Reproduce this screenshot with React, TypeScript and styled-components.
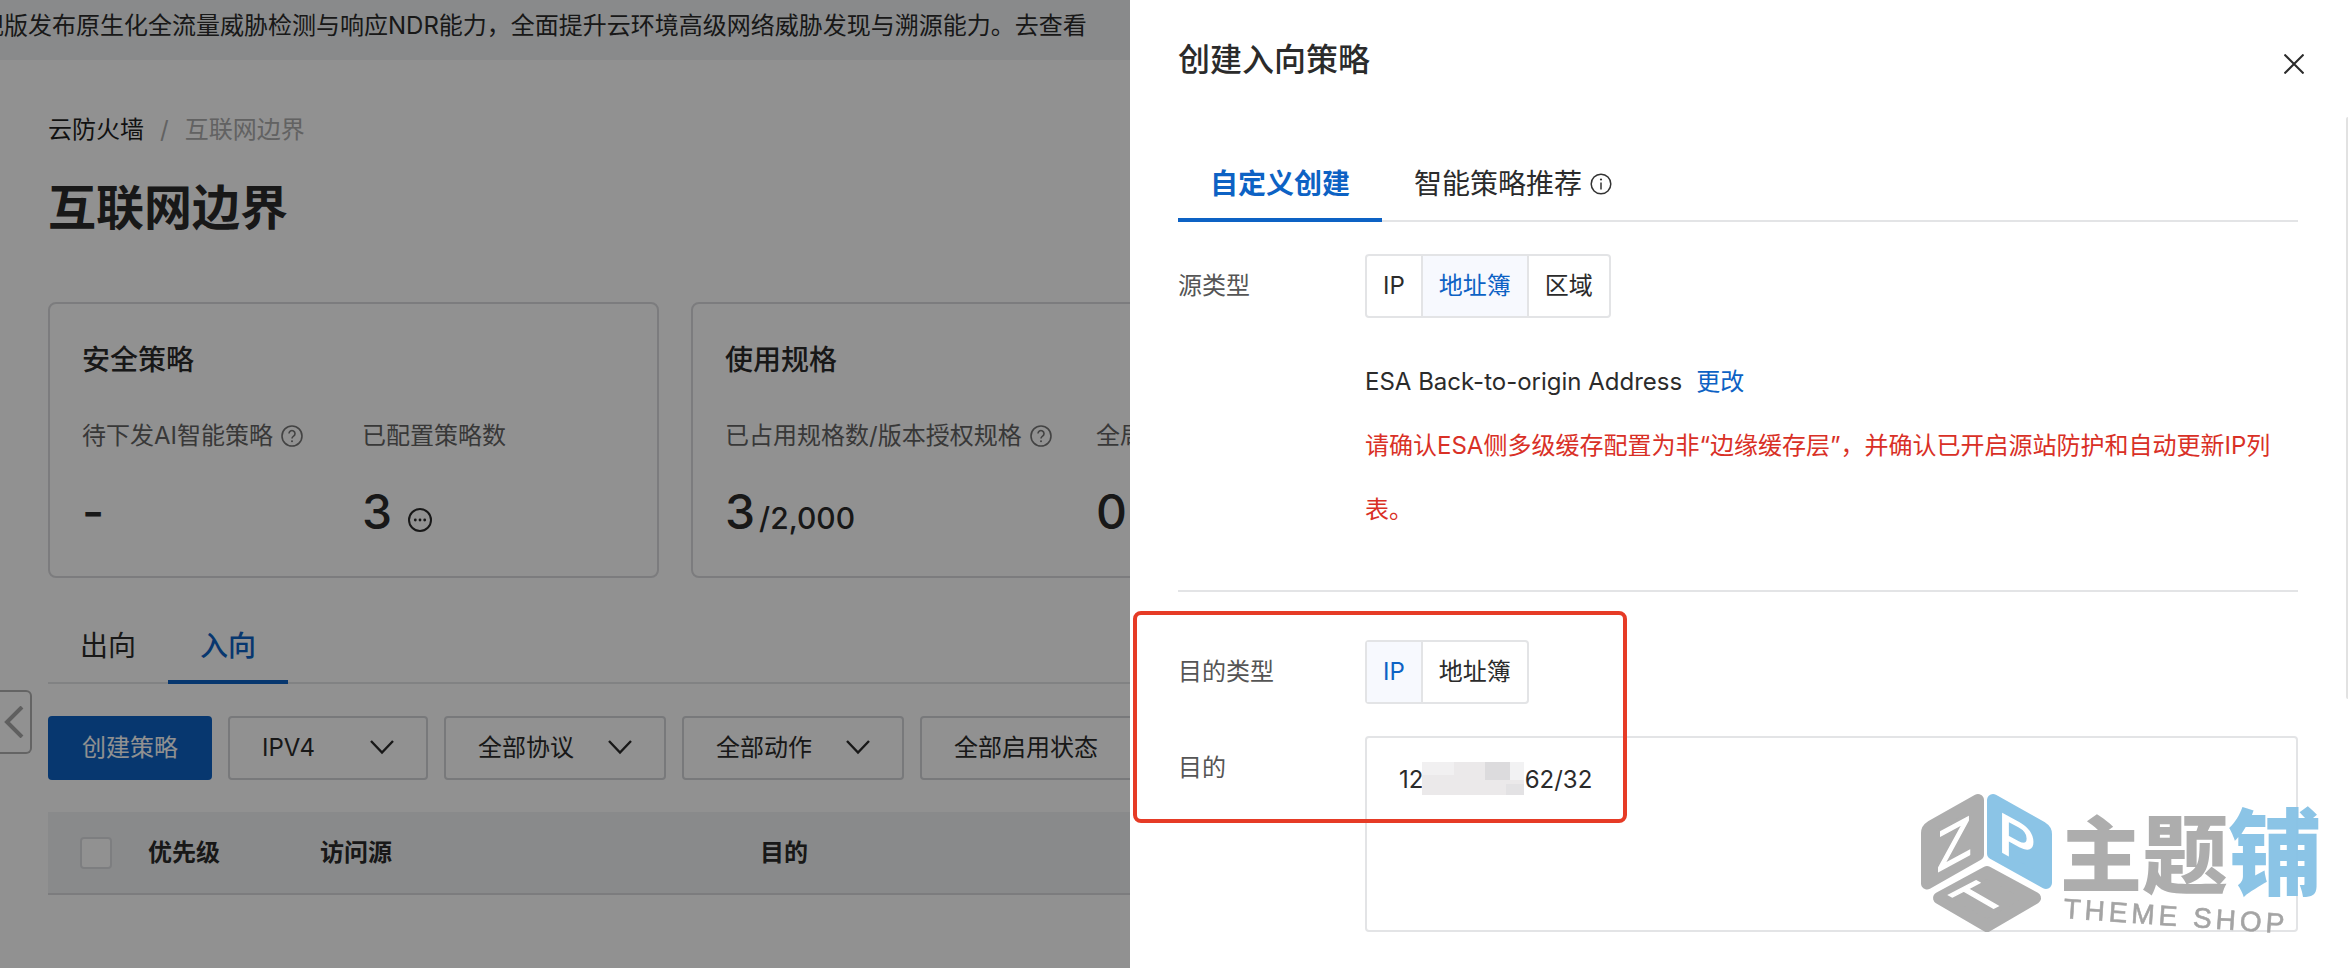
import React, { useState } from "react";
import styled, { createGlobalStyle, css } from "styled-components";

const blue = "#0d62c4";
const line = "#e3e4e6";
const ink = "#2b2b2b";

const GlobalStyle = createGlobalStyle`
  *, *::before, *::after { box-sizing: border-box; }
  body {
    margin: 0;
    background: #fff;
    color: ${ink};
    font: 400 24px/32px Inter, "Noto Sans CJK SC", sans-serif;
    overflow-x: hidden;
  }
  button, select, textarea, input { font: inherit; color: inherit; margin: 0; }
  h1, h2, h3, p { margin: 0; font-weight: 500; }
`;

const Page = styled.div`
  position: relative;
  min-height: 100vh;
  overflow: hidden;
`;

const Banner = styled.div`
  height: 60px;
  padding: 10px 0;
  overflow: hidden;
  background: #f1f3f5;
  white-space: nowrap;
  text-indent: -20px;
`;

const BannerLink = styled.a`
  color: inherit;
  text-decoration: none;
`;

const Main = styled.main`
  padding: 54px 48px 0;
`;

const Breadcrumb = styled.nav`
  display: flex;
  gap: 16px;
  color: #acacac;

  a {
    color: #1f1f1f;
    text-decoration: none;
  }
`;

const PageTitle = styled.h1`
  margin-top: 30px;
  font-size: 48px;
  line-height: 64px;
  font-weight: 700;
`;

const Cards = styled.div`
  display: grid;
  grid-template-columns: 611px 1fr;
  gap: 32px;
  margin-top: 62px;
`;

const Card = styled.section`
  padding: 36px 32px 40px;
  border: 2px solid #dadbdd;
  border-radius: 8px;
`;

const CardTitle = styled.h2`
  font-size: 28px;
  line-height: 40px;
`;

const Stats = styled.div<{ $first: number }>`
  display: grid;
  grid-template-columns: ${(p) => p.$first}px 1fr;
  margin-top: 40px;
`;

const StatLabel = styled.div`
  display: flex;
  align-items: center;
  gap: 8px;
  color: #636363;
  white-space: nowrap;
`;

const StatValue = styled.div`
  display: flex;
  align-items: baseline;
  gap: 4px;
  height: 48px;
  margin-top: 36px;
  font-size: 48px;
  line-height: 48px;
  font-weight: 500;

  small {
    font-size: 30px;
  }
  svg {
    align-self: flex-end;
    margin: 0 0 4px 12px;
  }
`;

const TabList = styled.div<{ $top: number }>`
  display: flex;
  height: 76px;
  margin-top: ${(p) => p.$top}px;
  box-shadow: inset 0 -2px ${line};
`;

const Tab = styled.button<{ $bold?: boolean }>`
  display: flex;
  align-items: center;
  gap: 8px;
  padding: 0 32px;
  border: 0;
  background: none;
  font-size: 28px;
  line-height: 40px;

  &[aria-selected="true"] {
    color: ${blue};
    font-weight: ${(p) => (p.$bold ? 700 : 500)};
    box-shadow: inset 0 -4px ${blue};
  }
`;

const Toolbar = styled.div`
  display: flex;
  gap: 16px;
  margin-top: 32px;
`;

const PrimaryButton = styled.button`
  width: 164px;
  height: 64px;
  border: 0;
  border-radius: 4px;
  background: ${blue};
  color: #fff;
`;

const SelectBox = styled.div<{ $width: number }>`
  position: relative;
  width: ${(p) => p.$width}px;

  select {
    width: 100%;
    height: 64px;
    padding: 0 32px;
    border: 2px solid #d3d5d8;
    border-radius: 4px;
    background: none;
    appearance: none;
  }
  svg {
    position: absolute;
    right: 34px;
    top: 23px;
    pointer-events: none;
  }
`;

const RuleTable = styled.table`
  width: 100%;
  margin-top: 32px;
  border-collapse: separate;
  border-spacing: 0;
  table-layout: fixed;
  background: #f1f3f5;

  th {
    height: 83px;
    padding: 0;
    border-bottom: 2px solid #dadbdd;
    text-align: left;
    font-weight: 700;
  }
`;

const HeadCell = styled.th<{ $width?: number }>`
  ${(p) => p.$width && css`width: ${p.$width}px;`}
`;

const CheckBox = styled.input`
  display: block;
  width: 32px;
  height: 32px;
  margin-left: 32px;
  border: 2px solid #dcdee1;
  border-radius: 4px;
  background: #fff;
  appearance: none;
`;

const Collapse = styled.button`
  position: absolute;
  left: 0;
  top: 690px;
  display: flex;
  align-items: center;
  width: 32px;
  height: 64px;
  padding: 0 0 0 4px;
  border: 2px solid #b0b0b0;
  border-left: 0;
  border-radius: 0 6px 6px 0;
  background: #fff;
`;

const Mask = styled.div`
  position: fixed;
  inset: 0;
  background: rgba(0, 0, 0, 0.43);
`;

const Drawer = styled.aside`
  position: fixed;
  top: 0;
  right: 0;
  bottom: 0;
  width: min(1218px, 100%);
  padding: 40px 50px 0 48px;
  overflow: hidden;
  background: #fff;
`;

const DrawerHead = styled.header`
  display: flex;
  align-items: flex-end;
  justify-content: space-between;
  margin-right: -12px;

  h2 {
    font-size: 32px;
    line-height: 40px;
  }
`;

const CloseButton = styled.button`
  display: flex;
  padding: 6px;
  border: 0;
  background: none;
`;

const Form = styled.form`
  display: flex;
  flex-direction: column;
  gap: 32px;
  margin-top: 32px;
`;

const Field = styled.div`
  display: grid;
  grid-template-columns: 187px 1fr;
  line-height: 64px;
`;

const FieldLabel = styled.label`
  color: #555;
`;

const Segments = styled.div`
  display: flex;
  justify-self: start;
  height: 64px;
  border: 2px solid ${line};
  border-radius: 4px;
  line-height: 60px;
`;

const Segment = styled.label`
  position: relative;
  padding: 0 16px;

  & + & {
    border-left: 2px solid ${line};
  }
  &:has(input:checked) {
    background: #f7f9fe;
    color: ${blue};
  }
  input {
    position: absolute;
    inset: 0;
    opacity: 0;
  }
`;

const Details = styled.div`
  grid-column: 2;
  margin-top: 32px;
`;

const ChangeLink = styled.a`
  margin-left: 14px;
  color: ${blue};
  text-decoration: none;
`;

const Warning = styled.p`
  color: #d93026;
  font-weight: 400;
`;

const Divider = styled.hr`
  width: 100%;
  height: 2px;
  margin: 16px 0;
  border: 0;
  background: ${line};
`;

const AddressBox = styled.div`
  position: relative;

  textarea {
    display: block;
    width: 100%;
    height: 196px;
    padding: 26px 32px;
    border: 2px solid ${line};
    border-radius: 4px;
    background: none;
    line-height: 32px;
    resize: none;
  }
  svg {
    position: absolute;
    left: 57px;
    top: 26px;
  }
`;

const Highlight = styled.div`
  position: absolute;
  left: 3px;
  top: 611px;
  width: 494px;
  height: 212px;
  border: 4px solid #e63b26;
  border-radius: 8px;
  pointer-events: none;
`;

const ScrollThumb = styled.div`
  position: absolute;
  right: 0;
  top: 117px;
  width: 2px;
  height: 582px;
  border-radius: 2px 0 0 2px;
  background: #e2e2e2;
`;

const Watermark = styled.svg`
  position: fixed;
  right: 8px;
  bottom: 8px;
  overflow: visible;
  opacity: 0.95;
  pointer-events: none;
`;

const HelpIcon = () => (
  <svg width="22" height="22" viewBox="0 0 22 22" fill="none" stroke="#777" strokeWidth="1.6">
    <circle cx="11" cy="11" r="10" />
    <path d="M8 8.6a3 3 0 1 1 4.6 2.5c-1 .7-1.6 1.2-1.6 2.3" />
    <circle cx="11" cy="16.2" r="1" fill="#777" stroke="none" />
  </svg>
);

const InfoIcon = () => (
  <svg width="22" height="22" viewBox="0 0 22 22" fill="none" stroke="#333" strokeWidth="1.5">
    <circle cx="11" cy="11" r="9.8" />
    <path d="M11 9.4v7" />
    <circle cx="11" cy="6.5" r="1.1" fill="#333" stroke="none" />
  </svg>
);

const MoreIcon = () => (
  <svg width="24" height="24" viewBox="0 0 24 24" fill="none" stroke={ink} strokeWidth="2">
    <circle cx="12" cy="12" r="11" />
    <g fill={ink} stroke="none">
      <circle cx="7.3" cy="12" r="1.4" />
      <circle cx="12" cy="12" r="1.4" />
      <circle cx="16.7" cy="12" r="1.4" />
    </g>
  </svg>
);

const Chevron = () => (
  <svg width="24" height="16" viewBox="0 0 24 16" fill="none" stroke={ink} strokeWidth="2.4">
    <path d="M1 2 12 13.500 23 2" />
  </svg>
);

const Logo = () => (
  <Watermark width="422" height="190" viewBox="-2 -23 422 190" aria-hidden="true">
    <g strokeWidth="12" strokeLinejoin="round">
      <path d="M58 7V61.500L7 90.500V40Q7 36 11 33.500Z" fill="#a9a9a9" stroke="#a9a9a9" />
      <path d="M73 7 122 34.500Q126 37 126 41V90L73 60.500Z" fill="#85c1e5" stroke="#85c1e5" />
      <path d="M67 79 115 105 67 133 19 105Z" fill="#a9a9a9" stroke="#a9a9a9" />
    </g>
    <g fill="#fff" stroke="#fff" strokeWidth="1.500" fontFamily="Liberation Sans, sans-serif" fontSize="56" textAnchor="middle">
      <text transform="matrix(1 -0.54 0 1 34 70)">Z</text>
      <text transform="matrix(1 0.54 0 1 97 67)">P</text>
      <text transform="matrix(0.87 -0.45 0.87 0.5 76 114)">T</text>
    </g>
    <g fontFamily="Noto Sans CJK SC, sans-serif" fontWeight="900" fill="#a9a9a9">
      <text x="140" y="92" fontSize="82">主</text>
      <text x="222" y="94" fontSize="86">题</text>
      <text x="308" y="95" fontSize="94" fill="#85c1e5">铺</text>
    </g>
    <text
      transform="translate(143 125) rotate(4)"
      fontFamily="Liberation Sans, sans-serif"
      fontSize="28"
      letterSpacing="4"
      fill="#a0a0a0"
      stroke="#a0a0a0"
      strokeWidth="0.600"
    >
      THEME SHOP
    </text>
  </Watermark>
);

const Filter = ({ label, width }: { label: string; width: number }) => (
  <SelectBox $width={width}>
    <select aria-label={label}>
      <option>{label}</option>
    </select>
    <Chevron />
  </SelectBox>
);

const SegmentField = ({
  label,
  name,
  options,
  initial,
  children,
}: {
  label: string;
  name: string;
  options: string[];
  initial: string;
  children?: React.ReactNode;
}) => {
  const [value, setValue] = useState(initial);
  return (
    <Field>
      <FieldLabel as="span" id={`${name}-label`}>{label}</FieldLabel>
      <Segments role="radiogroup" aria-labelledby={`${name}-label`}>
        {options.map((option) => (
          <Segment key={option}>
            <input
              type="radio"
              name={name}
              checked={value === option}
              onChange={() => setValue(option)}
            />
            {option}
          </Segment>
        ))}
      </Segments>
      {children}
    </Field>
  );
};

export default function App() {
  return (
    <>
      <GlobalStyle />
      <Page lang="zh-CN">
        <Banner>
          规版发布原生化全流量威胁检测与响应NDR能力，全面提升云环境高级网络威胁发现与溯源能力。
          <BannerLink href="#ndr">去查看</BannerLink>
        </Banner>
        <Main>
          <Breadcrumb>
            <a href="#firewall">云防火墙</a>
            <span>/</span>
            <span>互联网边界</span>
          </Breadcrumb>
          <PageTitle>互联网边界</PageTitle>

          <Cards>
            <Card>
              <CardTitle>安全策略</CardTitle>
              <Stats $first={280}>
                <div>
                  <StatLabel>待下发AI智能策略<HelpIcon /></StatLabel>
                  <StatValue>-</StatValue>
                </div>
                <div>
                  <StatLabel>已配置策略数</StatLabel>
                  <StatValue>3<MoreIcon /></StatValue>
                </div>
              </Stats>
            </Card>
            <Card>
              <CardTitle>使用规格</CardTitle>
              <Stats $first={371}>
                <div>
                  <StatLabel>已占用规格数/版本授权规格<HelpIcon /></StatLabel>
                  <StatValue>3<small>/2,000</small></StatValue>
                </div>
                <div>
                  <StatLabel>全局</StatLabel>
                  <StatValue>0</StatValue>
                </div>
              </Stats>
            </Card>
          </Cards>

          <TabList role="tablist" $top={30}>
            <Tab role="tab" aria-selected={false}>出向</Tab>
            <Tab role="tab" aria-selected>入向</Tab>
          </TabList>

          <Toolbar>
            <PrimaryButton>创建策略</PrimaryButton>
            <Filter label="IPV4" width={200} />
            <Filter label="全部协议" width={222} />
            <Filter label="全部动作" width={222} />
            <Filter label="全部启用状态" width={270} />
          </Toolbar>

          <RuleTable>
            <thead>
              <tr>
                <HeadCell $width={100}>
                  <CheckBox type="checkbox" aria-label="全选" />
                </HeadCell>
                <HeadCell $width={172}>优先级</HeadCell>
                <HeadCell $width={440}>访问源</HeadCell>
                <HeadCell>目的</HeadCell>
              </tr>
            </thead>
          </RuleTable>
        </Main>
        <Collapse aria-label="收起">
          <svg width="20" height="32" viewBox="0 0 20 32" fill="none" stroke="#a8a8a8" strokeWidth="4">
            <path d="M18 1 3 16 18 31" />
          </svg>
        </Collapse>
      </Page>

      <Mask />

      <Drawer lang="zh-CN">
        <DrawerHead>
          <h2>创建入向策略</h2>
          <CloseButton aria-label="关闭">
            <svg width="20" height="20" viewBox="0 0 20 20" stroke={ink} strokeWidth="2">
              <path d="M0.500 0.500 19.500 19.500M19.500 0.500 0.500 19.500" />
            </svg>
          </CloseButton>
        </DrawerHead>

        <TabList role="tablist" $top={66}>
          <Tab role="tab" aria-selected $bold>自定义创建</Tab>
          <Tab role="tab" aria-selected={false}>智能策略推荐<InfoIcon /></Tab>
        </TabList>

        <Form>
          <SegmentField label="源类型" name="source" options={["IP", "地址簿", "区域"]} initial="地址簿">
            <Details>
              <div>
                ESA Back-to-origin Address
                <ChangeLink href="#change">更改</ChangeLink>
              </div>
              <Warning>
                请确认ESA侧多级缓存配置为非“边缘缓存层”，并确认已开启源站防护和自动更新IP列表。
              </Warning>
            </Details>
          </SegmentField>

          <Divider />

          <SegmentField label="目的类型" name="target" options={["IP", "地址簿"]} initial="IP" />

          <Field>
            <FieldLabel htmlFor="address">目的</FieldLabel>
            <AddressBox>
              <textarea id="address" defaultValue={"12" + " ".repeat(15) + "62/32"} />
              <svg width="102" height="33" viewBox="0 0 102 33" aria-hidden="true">
                <path d="M0 0H102V33H0Z" fill="#ebe9ea" />
                <path d="M0 0H32V13H0Z" fill="#f1f0f1" />
                <path d="M63 0H88V18H63Z" fill="#dcdbdd" />
                <path d="M88 0H102V18H88Z" fill="#f2f2f3" />
                <path d="M84 22H102V33H84Z" fill="#e3e2e4" />
              </svg>
            </AddressBox>
          </Field>
        </Form>

        <Highlight />
        <ScrollThumb />
      </Drawer>

      <Logo />
    </>
  );
}
